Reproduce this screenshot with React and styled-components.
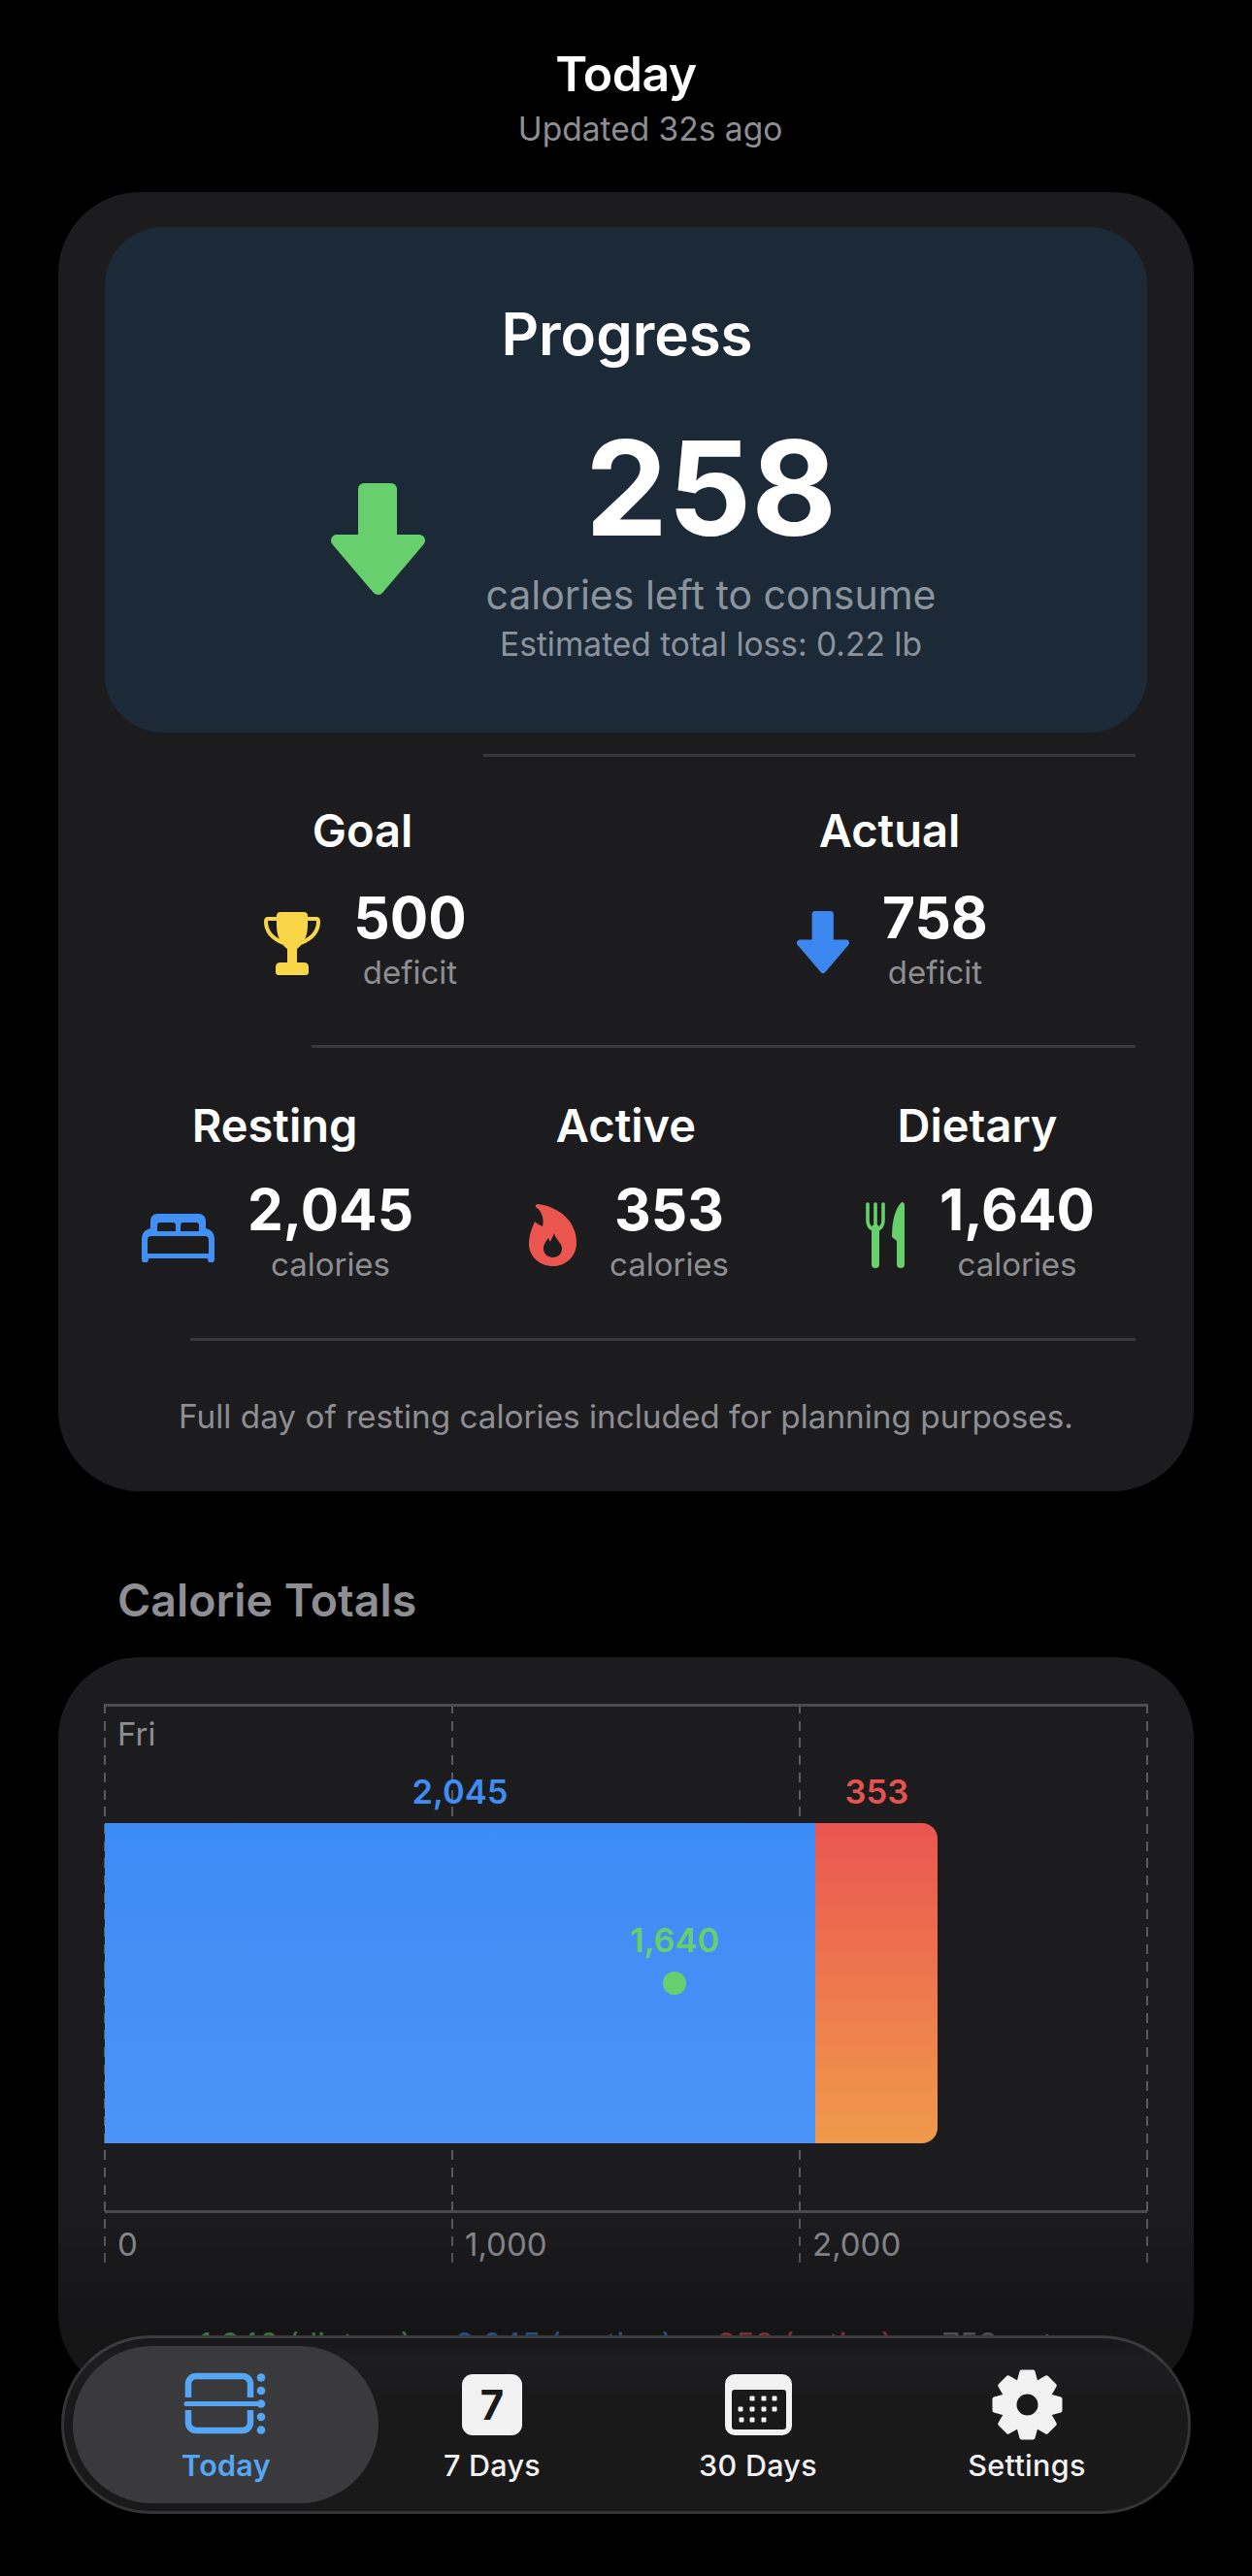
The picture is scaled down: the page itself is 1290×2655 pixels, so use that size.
import React from 'react';
import styled, { createGlobalStyle } from 'styled-components';

const GlobalStyle = createGlobalStyle`
  html, body {
    margin: 0;
    padding: 0;
    background: #000;
  }
  body {
    font-family: Inter, "Noto Sans", "Liberation Sans", sans-serif;
    color: #fff;
  }
`;

const Page = styled.div`
  position: relative;
  width: 1290px;
  height: 2655px;
  overflow: hidden;
  background: #000;
`;

const Header = styled.header`
  padding-top: 50px;
  margin-bottom: 45px;
  text-align: center;
`;

const HeaderTitle = styled.div`
  font-size: 50px;
  line-height: 52px;
  font-weight: 600;
  letter-spacing: -0.5px;
`;

const HeaderSub = styled.div`
  margin-top: 11px;
  padding-left: 50px;
  font-size: 33.5px;
  line-height: 40px;
  color: #8e8e93;
`;

const Card = styled.section`
  box-sizing: border-box;
  width: 1170px;
  margin-left: 60px;
  padding: ${(p) => p.$padding};
  background: #1c1c1e;
  border-radius: 84px;
`;

const ProgressPanel = styled.div`
  padding: 74px 0 71px;
  background: #1c2a38;
  border-radius: 60px;
  text-align: center;
`;

const ProgressTitle = styled.div`
  padding-left: 2px;
  font-size: 60px;
  line-height: 72px;
  font-weight: 600;
`;

const ProgressRow = styled.div`
  display: flex;
  align-items: center;
  justify-content: center;
  gap: 62px;
  margin-top: 53px;
  padding-left: 16px;
`;

const ProgressText = styled.div`
  display: flex;
  flex-direction: column;
  align-items: center;
`;

const BigNumber = styled.div`
  font-size: 135px;
  line-height: 140px;
  font-weight: 700;
`;

const ProgressSub = styled.div`
  margin-top: 18px;
  font-size: 41px;
  line-height: 44px;
  color: #8b939d;
`;

const ProgressNote = styled.div`
  margin-top: 9px;
  font-size: 33.5px;
  line-height: 40px;
  color: #8b939d;
`;

const Divider = styled.div`
  height: 3px;
  margin: ${(p) => p.$top}px 12px 0 ${(p) => p.$left}px;
  background: #38383a;
`;

const StatRow = styled.div`
  display: grid;
  grid-template-columns: repeat(${(p) => p.$cols}, 1fr);
  margin: 0 -6px;
  padding: ${(p) => p.$top}px 0 ${(p) => p.$bottom}px;
`;

const Stat = styled.div`
  display: flex;
  flex-direction: column;
  align-items: center;
`;

const StatTitle = styled.div`
  font-size: 47px;
  line-height: 56px;
  font-weight: 600;
`;

const StatBody = styled.div`
  display: flex;
  align-items: center;
  gap: ${(p) => p.$gap}px;
  margin-top: ${(p) => p.$top}px;
  padding-left: 6px;
`;

const StatText = styled.div`
  display: flex;
  flex-direction: column;
  align-items: center;
`;

const StatValue = styled.div`
  font-size: 58.5px;
  line-height: 70px;
  font-weight: 700;
`;

const StatLabel = styled.div`
  margin-top: 1px;
  font-size: 33px;
  line-height: 40px;
  color: #8e8e93;
`;

const IconSlot = styled.svg`
  display: block;
  flex: none;
  margin-top: ${(p) => p.$top || 0}px;
`;

const Footnote = styled.div`
  margin-top: 58px;
  font-size: 33.3px;
  line-height: 40px;
  text-align: center;
  color: #8e8e93;
`;

const SectionTitle = styled.h2`
  margin: 80px 0 27px 121px;
  font-size: 46.5px;
  line-height: 64px;
  font-weight: 600;
  color: #8e8e93;
`;

const Plot = styled.div`
  position: relative;
  height: 576px;
`;

const GridLine = styled.div`
  position: absolute;
  top: 0;
  bottom: 0;
  width: 2px;
  background: repeating-linear-gradient(180deg, #5a5a5e 0 10px, transparent 10px 17.7px);
`;

const AxisLine = styled.div`
  position: absolute;
  left: 0;
  right: 0;
  top: ${(p) => p.$top}px;
  height: 3px;
  background: #4c4c50;
`;

const AxisLabel = styled.div`
  position: absolute;
  top: 537px;
  margin-left: 13px;
  font-size: 33px;
  line-height: 40px;
  color: #8e8e93;
`;

const DayLabel = styled.div`
  position: absolute;
  top: 11px;
  left: 13px;
  font-size: 33px;
  line-height: 40px;
  color: #8e8e93;
`;

const Bar = styled.div`
  position: absolute;
  top: 123px;
  height: 330px;
  background: ${(p) => p.$fill};
  border-radius: ${(p) => p.$radius};
`;

const BarValue = styled.div`
  position: absolute;
  top: ${(p) => p.$top}px;
  transform: translateX(-50%);
  font-size: 34.5px;
  line-height: 40px;
  font-weight: 600;
  color: ${(p) => p.$color};
`;

const Dot = styled.div`
  position: absolute;
  top: 276px;
  width: 24px;
  height: 24px;
  transform: translateX(-50%);
  border-radius: 50%;
  background: #67cf6b;
`;

const Equation = styled.div`
  display: flex;
  justify-content: center;
  gap: 15px;
  margin: 63px 0 0;
  padding-bottom: 30px;
  font-size: 32px;
  line-height: 44px;
  white-space: nowrap;
  opacity: 0.7;
`;

const Term = styled.span`
  color: ${(p) => p.$color};
`;

const BottomFade = styled.div`
  position: absolute;
  left: 0;
  right: 0;
  top: 2270px;
  height: 240px;
  background: linear-gradient(180deg, rgba(0, 0, 0, 0), rgba(0, 0, 0, 0.26) 55%, rgba(0, 0, 0, 0.26));
  pointer-events: none;
`;

const TabBar = styled.nav`
  position: absolute;
  left: 63px;
  bottom: 64px;
  box-sizing: border-box;
  display: grid;
  grid-template-columns: 274px 274px 274px 280px;
  align-items: start;
  width: 1164px;
  height: 184px;
  padding: 32px 0 0 30px;
  border: 3px solid #343436;
  border-top-color: #3c3c3e;
  border-radius: 92px;
  background: linear-gradient(180deg, #18181a 0, #1d1d1f 12%, #1c1c1e 24%, #19191a 34%, #19191a 100%);
`;

const Tab = styled.div`
  position: relative;
  display: flex;
  flex-direction: column;
  align-items: center;
  gap: 7px;
  color: ${(p) => (p.$active ? '#55a7f5' : '#f2f2f2')};

  ${(p) =>
    p.$active &&
    `
    &::before {
      content: '';
      position: absolute;
      left: -21px;
      right: -20px;
      top: -24px;
      bottom: -19px;
      border-radius: 81px;
      background: #3a3a3c;
    }
  `}
`;

const TabIcon = styled.div`
  position: relative;
  display: flex;
  align-items: center;
  justify-content: center;
  height: 72px;
`;

const TabLabel = styled.div`
  position: relative;
  font-size: 30.5px;
  line-height: 40px;
  font-weight: ${(p) => (p.$active ? 600 : 500)};
  letter-spacing: 0.3px;
`;

const SevenBadge = styled.div`
  display: flex;
  align-items: center;
  justify-content: center;
  width: 62px;
  height: 63px;
  border-radius: 11px;
  background: #f2f2f2;
  color: #1a1a1b;
  font-size: 42px;
  font-weight: 700;
`;

const ArrowDown = ({ width, height, color, top }) => (
  <IconSlot $top={top} width={width} height={height} viewBox="0 0 97 115">
    <path
      d="M34 6 H62 V59 H91 L48.5 109 L6 59 H34 Z"
      fill={color}
      stroke={color}
      strokeWidth="12"
      strokeLinejoin="round"
    />
  </IconSlot>
);

const Trophy = () => (
  <IconSlot width="58" height="65" viewBox="0 0 58 65" $top={11}>
    <path
      fill="#f8d648"
      d="M13 4 Q13 0 17 0 H41 Q45 0 45 4 V14 C45 28 38 35 34 38 V52 H41 Q46 52 46 57 V62 Q46 65 43 65 H15 Q12 65 12 62 V57 Q12 52 17 52 H24 V38 C20 35 13 28 13 14 Z"
    />
    <path
      fill="none"
      stroke="#f8d648"
      strokeWidth="4"
      d="M13 7 H4 Q2 7 2 10 C2 20 8 27 20 32 M45 7 H54 Q56 7 56 10 C56 20 50 27 38 32"
    />
  </IconSlot>
);

const Bed = () => (
  <IconSlot width="75" height="50" viewBox="0 0 75 50" $top={17}>
    <path
      fill="#4090f5"
      fillRule="evenodd"
      d="M9 15 V7 a7 7 0 0 1 7-7 H59 a7 7 0 0 1 7 7 V15 Q75 17 75 26 V47 a3.5 3.5 0 0 1-7 0 V46 H7 V47 a3.5 3.5 0 0 1-7 0 V26 Q0 17 9 15 Z
         M19 9 a3 3 0 0 0-3 3 V18 H35 V12 a3 3 0 0 0-3-3 Z
         M43 9 a3 3 0 0 0-3 3 V18 H59 V12 a3 3 0 0 0-3-3 Z
         M10 23 a4 4 0 0 0-4 4 V41 H69 V27 a4 4 0 0 0-4-4 Z"
    />
  </IconSlot>
);

const Flame = () => (
  <IconSlot width="49" height="64" viewBox="0 0 49 64" $top={10}>
    <path
      fill="#ea5550"
      fillRule="evenodd"
      d="M9 0 C32 3 49 18 49 40 C49 54 38 64 25 64 C11 64 0 54 0 41 C0 32 3 25 6 18 C8 20 12 22 14 23 C16 15 13 7 7 3 Q6 0 9 0 Z
         M26 30 C27 36 34 40 34 46 C34 51 30 55 25 55 C19 55 15 51 15 46 C15 41 18 38 20 35 L22 39 Z"
    />
  </IconSlot>
);

const Cutlery = () => (
  <IconSlot width="42" height="68" viewBox="0 0 42 68" $top={10}>
    <path
      fill="none"
      stroke="#67cf6b"
      strokeWidth="3.6"
      strokeLinecap="round"
      d="M2 2 V19 Q2 27 10 29 Q18 27 18 19 V2 M10 2 V29"
    />
    <path fill="none" stroke="#67cf6b" strokeWidth="8" strokeLinecap="round" d="M10 27 V64" />
    <path
      fill="#67cf6b"
      d="M37 0 Q40 0 40 3 V64 a4 4 0 0 1-8 0 V40 L27 36 Q27 10 37 0 Z"
    />
  </IconSlot>
);

const TodayIcon = () => (
  <svg width="88" height="68" viewBox="0 0 88 68">
    <g fill="none" stroke="currentColor" strokeWidth="6.5">
      <path d="M5 27 V13 a8 8 0 0 1 8-8 H61 a8 8 0 0 1 8 8 V27" />
      <path d="M5 40 V53 a8 8 0 0 0 8 8 H61 a8 8 0 0 0 8-8 V40" />
    </g>
    <path d="M3 33.5 H80" stroke="currentColor" strokeWidth="5" strokeLinecap="round" />
    <g fill="currentColor">
      <circle cx="80" cy="6.5" r="4.3" />
      <circle cx="80" cy="20" r="4.3" />
      <circle cx="80" cy="33.5" r="4.3" />
      <circle cx="80" cy="47" r="4.3" />
      <circle cx="80" cy="60.5" r="4.3" />
    </g>
  </svg>
);

const monthDots = [
  [28, 25], [40, 25], [51, 25],
  [16, 36], [28, 36], [40, 36], [51, 36],
  [17, 47], [28, 47], [40, 47],
];

const MonthIcon = () => (
  <svg width="69" height="63" viewBox="0 0 69 63">
    <path
      fill="currentColor"
      fillRule="evenodd"
      d="M10 0 H59 a10 10 0 0 1 10 10 V53 a10 10 0 0 1-10 10 H10 a10 10 0 0 1-10-10 V10 a10 10 0 0 1 10-10 Z
         M10 16 a3 3 0 0 0-3 3 V54 a3 3 0 0 0 3 3 H60 a3 3 0 0 0 3-3 V19 a3 3 0 0 0-3-3 Z"
    />
    {monthDots.map(([x, y]) => (
      <rect key={`${x}-${y}`} x={x - 2.5} y={y - 2.5} width="5" height="5" rx="1" fill="currentColor" />
    ))}
  </svg>
);

const GearIcon = () => (
  <svg width="73" height="73" viewBox="-36.5 -36.5 73 73">
    <circle r="18.5" fill="none" stroke="currentColor" strokeWidth="15" />
    {[0, 45, 90, 135, 180, 225, 270, 315].map((angle) => (
      <polygon
        key={angle}
        transform={`rotate(${angle})`}
        points="-9,-23 -6,-34 6,-34 9,-23"
        fill="currentColor"
        stroke="currentColor"
        strokeWidth="4"
        strokeLinejoin="round"
      />
    ))}
  </svg>
);

const PX_PER_UNIT = 0.358;
const RESTING = 2045;
const ACTIVE = 353;
const DIETARY = 1640;
const px = (value) => value * PX_PER_UNIT;

const tabs = [
  { label: 'Today', icon: <TodayIcon />, active: true },
  { label: '7 Days', icon: <SevenBadge>7</SevenBadge> },
  { label: '30 Days', icon: <MonthIcon /> },
  { label: 'Settings', icon: <GearIcon /> },
];

const StatBlock = ({ title, value, label, icon, gap, top }) => (
  <Stat>
    <StatTitle>{title}</StatTitle>
    <StatBody $gap={gap} $top={top}>
      {icon}
      <StatText>
        <StatValue>{value}</StatValue>
        <StatLabel>{label}</StatLabel>
      </StatText>
    </StatBody>
  </Stat>
);

export default function App() {
  return (
    <Page>
      <GlobalStyle />
      <Header>
        <HeaderTitle>Today</HeaderTitle>
        <HeaderSub>Updated 32s ago</HeaderSub>
      </Header>

      <Card $padding="36px 48px 57px 48px">
        <ProgressPanel>
          <ProgressTitle>Progress</ProgressTitle>
          <ProgressRow>
            <ArrowDown width={97} height={115} color="#67cf6b" top={-6} />
            <ProgressText>
              <BigNumber>258</BigNumber>
              <ProgressSub>calories left to consume</ProgressSub>
              <ProgressNote>Estimated total loss: 0.22 lb</ProgressNote>
            </ProgressText>
          </ProgressRow>
        </ProgressPanel>

        <Divider $top={22} $left={390} />
        <StatRow $cols={2} $top={48} $bottom={55}>
          <StatBlock title="Goal" value="500" label="deficit" icon={<Trophy />} gap={34} top={27} />
          <StatBlock
            title="Actual"
            value="758"
            label="deficit"
            icon={<ArrowDown width={54} height={64} color="#3c87f0" top={8} />}
            gap={34}
            top={27}
          />
        </StatRow>

        <Divider $top={0} $left={213} />
        <StatRow $cols={3} $top={52} $bottom={56}>
          <StatBlock title="Resting" value="2,045" label="calories" icon={<Bed />} gap={34} top={24} />
          <StatBlock title="Active" value="353" label="calories" icon={<Flame />} gap={34} top={24} />
          <StatBlock title="Dietary" value="1,640" label="calories" icon={<Cutlery />} gap={34} top={24} />
        </StatRow>

        <Divider $top={0} $left={88} />
        <Footnote>Full day of resting calories included for planning purposes.</Footnote>
      </Card>

      <SectionTitle>Calorie Totals</SectionTitle>

      <Card $padding="48px 48px 0 48px">
        <Plot>
          {[0, 1000, 2000, 3000].map((tick) => (
            <GridLine key={tick} style={{ left: px(tick) - 1 }} />
          ))}
          <AxisLine $top={0} />
          <AxisLine $top={522} />
          <DayLabel>Fri</DayLabel>
          {[0, 1000, 2000].map((tick) => (
            <AxisLabel key={tick} style={{ left: px(tick) }}>
              {tick.toLocaleString('en-US')}
            </AxisLabel>
          ))}
          <BarValue $top={71} $color="#3f8cf3" style={{ left: px(RESTING) / 2 }}>
            2,045
          </BarValue>
          <BarValue $top={71} $color="#e5534f" style={{ left: px(RESTING + ACTIVE / 2) }}>
            353
          </BarValue>
          <Bar
            $fill="linear-gradient(180deg, #3d8bf5, #4b94f7)"
            $radius="0"
            style={{ left: 0, width: px(RESTING) }}
          />
          <Bar
            $fill="linear-gradient(180deg, #ea5550, #f09a4b)"
            $radius="0 16px 16px 0"
            style={{ left: px(RESTING), width: px(ACTIVE) }}
          />
          <BarValue $top={224} $color="#67cf6b" style={{ left: px(DIETARY) }}>
            1,640
          </BarValue>
          <Dot style={{ left: px(DIETARY) }} />
        </Plot>
        <Equation>
          <Term $color="#67cf6b">1,640 (dietary)</Term>
          <Term $color="#8e8e93">-</Term>
          <Term $color="#3f8cf3">2,045 (resting)</Term>
          <Term $color="#8e8e93">-</Term>
          <Term $color="#e5534f">353 (active)</Term>
          <Term $color="#8e8e93">=</Term>
          <Term $color="#8e8e93">758 net</Term>
        </Equation>
      </Card>

      <BottomFade />

      <TabBar>
        {tabs.map((tab) => (
          <Tab key={tab.label} $active={tab.active}>
            <TabIcon>{tab.icon}</TabIcon>
            <TabLabel $active={tab.active}>{tab.label}</TabLabel>
          </Tab>
        ))}
      </TabBar>
    </Page>
  );
}
